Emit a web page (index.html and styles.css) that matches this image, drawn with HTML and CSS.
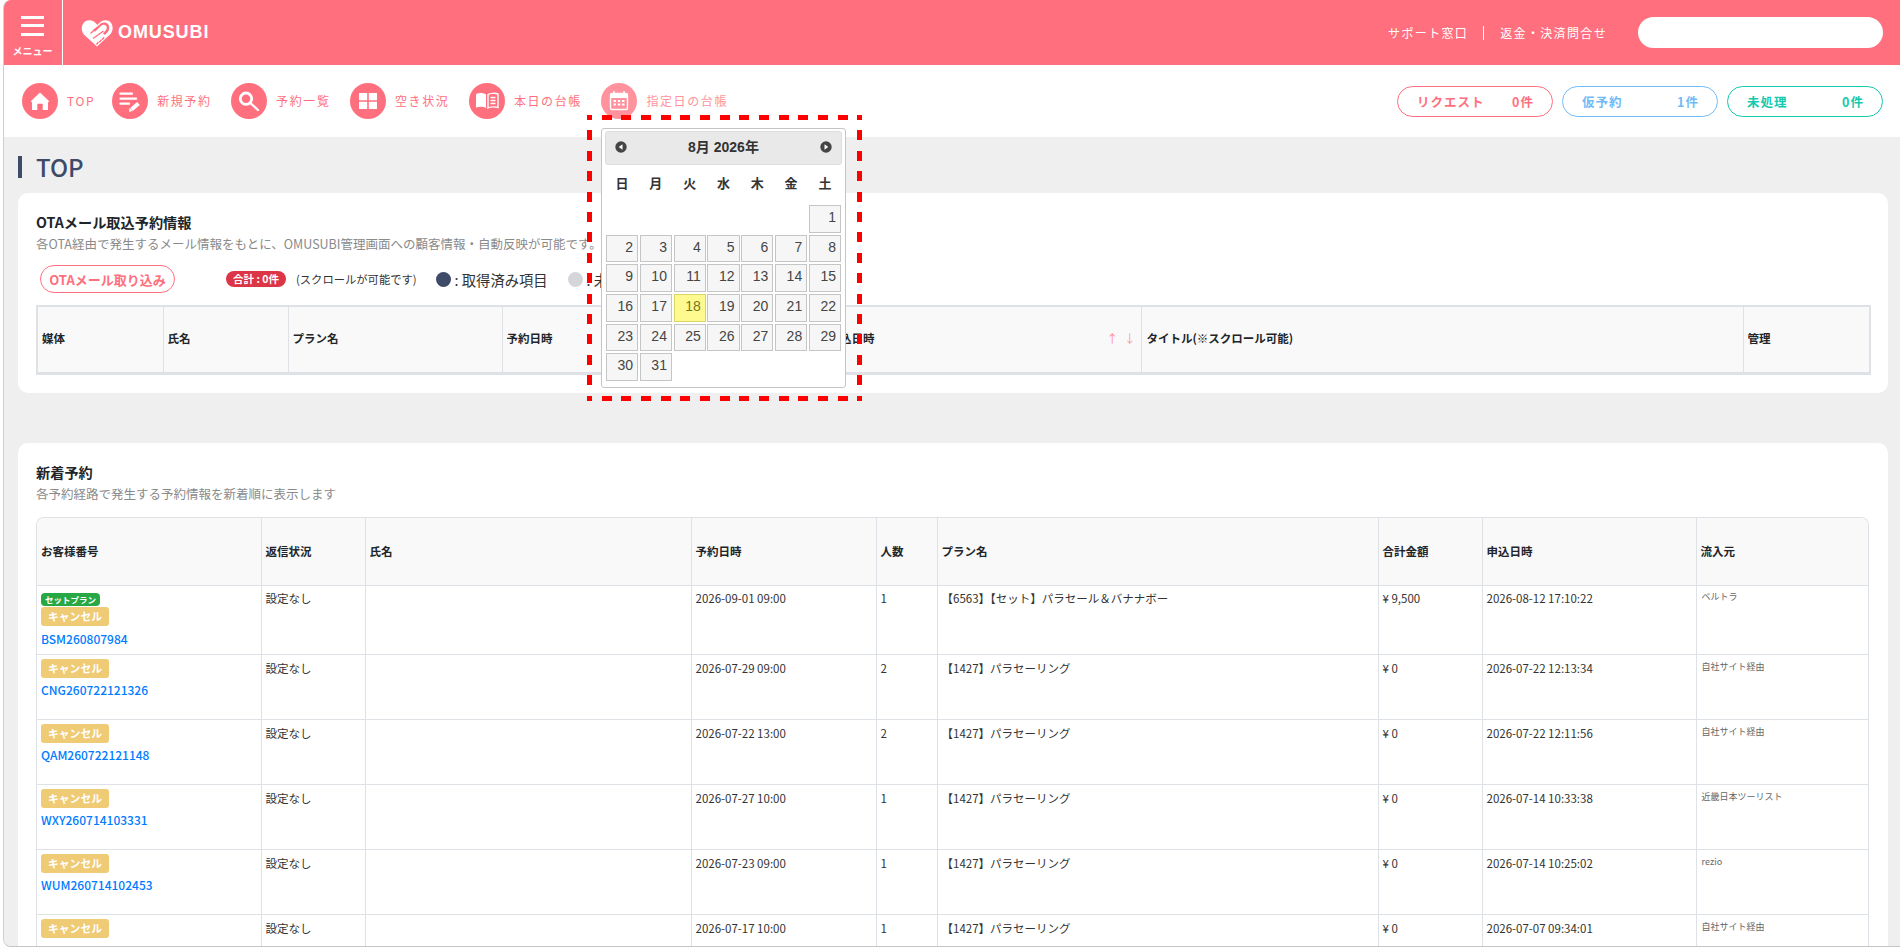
FILE: index.html
```html
<!DOCTYPE html>
<html lang="ja">
<head>
<meta charset="utf-8">
<title>OMUSUBI TOP</title>
<link rel="stylesheet" href="styles.css">
</head>
<body>
<div class="window">
  <header class="topbar">
    <div class="menu">
      <span class="burger"><i></i><i></i><i></i></span>
      <span class="menu-label">メニュー</span>
    </div>
    <div class="logo">
      <svg class="logo-mark" viewBox="0 0 32 28" aria-hidden="true">
        <path class="lm-heart" d="M16 27.500 2.800 15.500C-.5 11.500 .3 5 4.300 2.300 8 .3 12 1 14.500 4L16.500 6C19.500 1 25 0 28.500 2.300 32.500 5.500 32.500 11.500 29.500 15Z"/>
        <path class="lm-cut" d="M15 8.800 20 4.200C22.800 2.800 25.500 3.300 27.200 5.200 28.800 7.500 28.500 10.500 27 12.700L23.800 16 22 14.300 25 11C26.200 9.300 26 7.700 25 6.700 23.800 5.600 22.200 5.400 20.800 6.300L14 12.700 12 10.700Z" />
        <path class="lm-line" d="M9.500 14.500 16 8.500M12 19.500 22.500 12M15.500 25.500 17.500 23M18.300 23.300 20.500 20.800M21 20.800 23.200 18.300"/>
      </svg>
      <span class="logo-text">OMUSUBI</span>
    </div>
    <div class="top-links">
      <span>サポート窓口</span><span class="sep"></span><span>返金・決済問合せ</span>
    </div>
    <div class="search"></div>
  </header>

  <nav class="subnav">
    <a class="nav-item"><span class="circle"><svg viewBox="0 0 36 36"><path class="ic-fill" d="M18 9.500 8.800 18.200 10 19.500V27H15.300V20.800H20.700V27H26V19.500L27.200 18.200Z"/></svg></span><span class="nav-text">TOP</span></a>
    <a class="nav-item"><span class="circle"><svg viewBox="0 0 36 36"><path class="ic-line" d="M8.500 10.700H20M8.500 15.700H24M8.500 20.700H17"/><path class="ic-pen" d="M19.500 26.500 26.500 20.500"/><path class="ic-fill" d="M17 29 17.500 25 20.500 28Z"/></svg></span><span class="nav-text">新規予約</span></a>
    <a class="nav-item"><span class="circle"><svg viewBox="0 0 36 36"><circle class="ic-ring" cx="15" cy="15.700" r="5.700"/><path class="ic-line" d="M19.500 20.200 27 27"/></svg></span><span class="nav-text">予約一覧</span></a>
    <a class="nav-item"><span class="circle"><svg viewBox="0 0 36 36"><path class="ic-fill" d="M9 10H17.200V17.300H9ZM18.800 10H27V17.300H18.800ZM9 18.800H17.200V26H9ZM18.800 18.800H27V26H18.800Z"/></svg></span><span class="nav-text">空き状況</span></a>
    <a class="nav-item"><span class="circle"><svg viewBox="0 0 36 36"><path class="ic-fill" d="M7 11C10.500 9.500 14.500 9.800 17 11.500V25C14.500 23.500 10.500 23.300 7 24.500Z"/><path class="ic-thin" d="M19 11.500C21 10.300 26 9.800 29 11V24.500C26 23.500 21 23.800 19 25ZM21.500 14.500H26.500M21.500 17.500H26.500M21.500 20.500H26.500"/></svg></span><span class="nav-text">本日の台帳</span></a>
    <div class="nav-item nav-dim">
      <span class="circle"><svg viewBox="0 0 36 36"><rect class="ic-thin" x="9.500" y="10.500" width="17" height="16" rx="1.500"/><path class="ic-thin" d="M13 8V12M23 8V12"/><path class="ic-fill" d="M9.500 11H26.500V15H9.500Z"/><path class="ic-fill" d="M12.500 17H15V19H12.500ZM16.800 17H19.300V19H16.800ZM21 17H23.500V19H21ZM12.500 20.500H15V22.500H12.500ZM16.800 20.500H19.300V22.500H16.800ZM21 20.500H23.500V22.500H21Z"/></svg></span><span class="nav-text">指定日の台帳</span>
      <div class="picker-frame">
        <div class="datepicker">
          <div class="dp-head">
            <svg class="dp-arrow" viewBox="0 0 12 12"><circle class="dp-disc" cx="6" cy="6" r="5.700"/><path class="dp-tri" d="M7.500 3.300V8.700L3.800 6Z"/></svg>
            <span class="dp-title">8月 2026年</span>
            <svg class="dp-arrow" viewBox="0 0 12 12"><circle class="dp-disc" cx="6" cy="6" r="5.700"/><path class="dp-tri" d="M4.500 3.300V8.700L8.200 6Z"/></svg>
          </div>
          <div class="dp-week"><span>日</span><span>月</span><span>火</span><span>水</span><span>木</span><span>金</span><span>土</span></div>
          <div class="dp-days">
            <span class="day first">1</span>
            <span class="day">2</span><span class="day">3</span><span class="day">4</span><span class="day">5</span><span class="day">6</span><span class="day">7</span><span class="day">8</span>
            <span class="day">9</span><span class="day">10</span><span class="day">11</span><span class="day">12</span><span class="day">13</span><span class="day">14</span><span class="day">15</span>
            <span class="day">16</span><span class="day">17</span><span class="day today">18</span><span class="day">19</span><span class="day">20</span><span class="day">21</span><span class="day">22</span>
            <span class="day">23</span><span class="day">24</span><span class="day">25</span><span class="day">26</span><span class="day">27</span><span class="day">28</span><span class="day">29</span>
            <span class="day">30</span><span class="day">31</span>
          </div>
        </div>
      </div>
    </div>
    <div class="pills">
      <span class="pill pill-red"><span>リクエスト</span><span>0件</span></span>
      <span class="pill pill-blue"><span>仮予約</span><span>1件</span></span>
      <span class="pill pill-teal"><span>未処理</span><span>0件</span></span>
    </div>
  </nav>

  <main class="main">
    <h1 class="page-title">TOP</h1>

    <section class="card card-ota">
      <h2 class="card-title">OTAメール取込予約情報</h2>
      <p class="card-sub">各OTA経由で発生するメール情報をもとに、OMUSUBI管理画面への顧客情報・自動反映が可能です。</p>
      <div class="tools">
        <button class="ota-btn">OTAメール取り込み</button>
        <span class="total">合計 : 0件</span>
        <span class="scroll-note">(スクロールが可能です)</span>
        <span class="dot dot-dark"></span><span class="legend">: 取得済み項目</span>
        <span class="dot dot-grey"></span><span class="legend">: 未取得項目</span>
      </div>
      <table class="tbl tbl-ota">
        <colgroup><col class="o1"><col class="o2"><col class="o3"><col class="o4"><col class="o5"><col class="o6"><col class="o7"></colgroup>
        <thead><tr>
          <th>媒体</th><th>氏名</th><th>プラン名</th><th>予約日時</th>
          <th>申込日時<span class="sort"><span class="up">↑</span><span class="down">↓</span></span></th>
          <th class="th-title">タイトル(※スクロール可能)</th><th>管理</th>
        </tr></thead>
      </table>
    </section>

    <section class="card card-new">
      <h2 class="card-title">新着予約</h2>
      <p class="card-sub">各予約経路で発生する予約情報を新着順に表示します</p>
      <div class="tbl-wrap">
        <table class="tbl tbl-new">
          <colgroup><col class="n1"><col class="n2"><col class="n3"><col class="n4"><col class="n5"><col class="n6"><col class="n7"><col class="n8"><col class="n9"></colgroup>
          <thead><tr>
            <th>お客様番号</th><th>返信状況</th><th>氏名</th><th>予約日時</th><th>人数</th><th>プラン名</th><th>合計金額</th><th>申込日時</th><th>流入元</th>
          </tr></thead>
          <tbody>
            <tr>
              <td><span class="b-set">セットプラン</span><span class="b-cancel">キャンセル</span><a class="num">BSM260807984</a></td>
              <td>設定なし</td><td></td><td>2026-09-01 09:00</td><td>1</td><td>【6563】【セット】パラセール＆バナナボー</td><td>¥ 9,500</td><td>2026-08-12 17:10:22</td><td class="src">ベルトラ</td>
            </tr>
            <tr>
              <td><span class="b-cancel">キャンセル</span><a class="num">CNG260722121326</a></td>
              <td>設定なし</td><td></td><td>2026-07-29 09:00</td><td>2</td><td>【1427】パラセーリング</td><td>¥ 0</td><td>2026-07-22 12:13:34</td><td class="src">自社サイト経由</td>
            </tr>
            <tr>
              <td><span class="b-cancel">キャンセル</span><a class="num">QAM260722121148</a></td>
              <td>設定なし</td><td></td><td>2026-07-22 13:00</td><td>2</td><td>【1427】パラセーリング</td><td>¥ 0</td><td>2026-07-22 12:11:56</td><td class="src">自社サイト経由</td>
            </tr>
            <tr>
              <td><span class="b-cancel">キャンセル</span><a class="num">WXY260714103331</a></td>
              <td>設定なし</td><td></td><td>2026-07-27 10:00</td><td>1</td><td>【1427】パラセーリング</td><td>¥ 0</td><td>2026-07-14 10:33:38</td><td class="src">近畿日本ツーリスト</td>
            </tr>
            <tr>
              <td><span class="b-cancel">キャンセル</span><a class="num">WUM260714102453</a></td>
              <td>設定なし</td><td></td><td>2026-07-23 09:00</td><td>1</td><td>【1427】パラセーリング</td><td>¥ 0</td><td>2026-07-14 10:25:02</td><td class="src">rezio</td>
            </tr>
            <tr>
              <td><span class="b-cancel">キャンセル</span><a class="num">MGS260707093355</a></td>
              <td>設定なし</td><td></td><td>2026-07-17 10:00</td><td>1</td><td>【1427】パラセーリング</td><td>¥ 0</td><td>2026-07-07 09:34:01</td><td class="src">自社サイト経由</td>
            </tr>
          </tbody>
        </table>
      </div>
    </section>
  </main>
</div>
</body>
</html>
```

FILE: styles.css
```css
* { box-sizing: border-box; }
html, body { margin: 0; height: 950px; overflow: hidden; background: #fff; }
body { font-family: "Noto Sans CJK JP", "Noto Sans", sans-serif; color: #212529; font-size: 11.5px; }

.window {
  margin-left: 3px;
  height: 947px;
  border-left: 1px solid #cfcfcf;
  border-bottom: 1px solid #c4c4c4;
  border-radius: 8px 0 0 8px;
  overflow: hidden;
  background: #efefef;
}

/* top bar */
.topbar { display: flex; align-items: center; height: 65px; background: #ff6f7d; color: #fff; }
.menu {
  width: 59px; height: 65px; border-right: 1px solid #fff;
  display: flex; flex-direction: column; align-items: center; padding-top: 16px; padding-right: 1px;
}
.burger { display: flex; flex-direction: column; gap: 5.800px; width: 23px; }
.burger i { display: block; height: 2.700px; background: #fff; }
.menu-label { margin-top: 8px; font-size: 10px; font-weight: 700; line-height: 14px; white-space: nowrap; }
.logo { display: flex; align-items: center; margin-left: 18px; }
.logo-mark { width: 32px; height: 28px; display: block; }
.lm-heart { fill: #fff; }
.lm-cut { fill: #ff6f7d; }
.lm-line { fill: none; stroke: #ff6f7d; stroke-width: 1.300; }
.logo-text { margin-left: 5px; font-family: "Liberation Sans", Arial, sans-serif; font-weight: 700; font-size: 18px; letter-spacing: .9px; line-height: 22px; margin-top: -1px; }
.top-links { margin-left: auto; display: flex; align-items: center; font-size: 12px; letter-spacing: 1.350px; line-height: 18px; }
.sep { width: 1px; height: 14px; background: #fff; margin: 0 16px 0 15px; }
.search { width: 245px; height: 31px; margin: 0 17px 0 31px; background: #fff; border-radius: 16px; }

/* sub nav */
.subnav { position: relative; display: flex; align-items: center; height: 72px; padding-left: 18px; background: #fff; }
.nav-item { display: flex; align-items: center; margin-right: 19.500px; color: #ff6f7d; }
.nav-item:first-child { margin-right: 17px; }
.circle { width: 36px; height: 36px; border-radius: 50%; background: #ff6f7d; display: block; }
.circle svg { display: block; width: 36px; height: 36px; }
.nav-text { margin-left: 9px; font-size: 12px; font-weight: 400; letter-spacing: 1.600px; line-height: 18px; white-space: nowrap; }
.nav-dim { color: #ff929c; }
.nav-dim .circle { background: #ff929c; }
.ic-fill { fill: #fff; }
.ic-line { fill: none; stroke: #fff; stroke-width: 2.300; stroke-linecap: round; }
.ic-pen { fill: none; stroke: #fff; stroke-width: 4; }
.ic-ring { fill: none; stroke: #fff; stroke-width: 2.800; }
.ic-thin { fill: none; stroke: #fff; stroke-width: 1.400; }
.pills { margin-left: auto; display: flex; gap: 9px; padding-right: 17px; }
.pill {
  width: 156px; height: 31px; border: 1px solid; border-radius: 16px; padding: 0 18px 0 19px;
  display: flex; align-items: center; justify-content: space-between;
  font-size: 12.500px; font-weight: 700; letter-spacing: 1px; background: #fff;
}
.pill-red { color: #ff6f7d; border-color: #ff6f7d; }
.pill-blue { color: #72bbf8; border-color: #72bbf8; }
.pill-teal { color: #14c9ad; border-color: #14c9ad; }

/* date picker overlay: dashes drawn to the reference's pitch */
.picker-frame {
  --hdash: repeating-linear-gradient(90deg, #f00 0 5px, transparent 5px 14.660px, #f00 14.660px 19.660px);
  --vdash: repeating-linear-gradient(180deg, #f00 0 5px, transparent 5px 15.400px, #f00 15.400px 20.400px);
  position: absolute; left: 583px; top: 50px; z-index: 5;
  width: 275px; height: 286px; padding: 13px 16px 13px 14px;
  background:
    var(--hdash) left top / 100% 5px no-repeat,
    var(--hdash) left bottom / 100% 5px no-repeat,
    var(--vdash) left top / 5px 100% no-repeat,
    var(--vdash) right top / 5px 100% no-repeat;
}
.datepicker {
  width: 245px; height: 260px; padding: 2px 3px 0; background: #fff;
  border: 1px solid #c5c5c5; border-radius: 3px;
  font-family: "Liberation Sans", Arial, "Noto Sans CJK JP", sans-serif; color: #454545;
}
.dp-head {
  display: flex; align-items: center; justify-content: space-between; height: 34px; padding: 0 9px 2px;
  background: #e9e9e9; border: 1px solid #dddddd; border-radius: 3px;
}
.dp-arrow { width: 12px; height: 12px; display: block; }
.dp-disc { fill: #454545; }
.dp-tri { fill: #fff; }
.dp-title { font-size: 14px; font-weight: 700; color: #333; margin-top: -2px; }
.dp-week { display: grid; grid-template-columns: repeat(7, 1fr); column-gap: 1.700px; height: 40px; align-items: center; padding: 0 1px 5px; font-size: 13px; font-weight: 700; color: #333; text-align: center; }
.dp-days { display: grid; grid-template-columns: repeat(7, 1fr); grid-auto-rows: 27.700px; gap: 2px 1.700px; padding: 0 1px; }
.day {
  display: block; padding: 1px 4px 0 0; text-align: right; font-size: 14px; line-height: 20px;
  background: #f6f6f6; border: 1px solid #c5c5c5;
}
.day.first { grid-column: 7; }
.day.today { background: #fffa90; border-color: #dad55e; color: #777620; }

/* main */
.main { padding: 19px 12px 0 14px; background: #efefef; }
.page-title {
  margin: 0; padding-left: 14px; height: 22px; line-height: 22px;
  border-left: 4px solid #3d4a68; font-size: 24px; font-weight: 500; color: #3d4a68;
}
.card { background: #fff; border-radius: 10px; padding: 21px 19px 19px 18px; }
.card-ota { margin-top: 15px; height: 200px; }
.card-new { margin-top: 50px; height: 600px; }
.card-title { margin: 0; font-size: 14.200px; font-weight: 700; line-height: 16px; color: #212529; }
.card-sub { margin: 5px 0 0; font-size: 12.500px; line-height: 18px; color: #8a8a8a; white-space: nowrap; }
.tools { display: flex; align-items: center; margin-top: 12px; height: 28px; }
.ota-btn {
  width: 135px; height: 28px; margin-left: 4px; padding: 0; background: #fff;
  border: 1.500px solid #ff6f7d; border-radius: 14px;
  font-family: inherit; font-size: 13px; font-weight: 700; color: #ff6f7d; white-space: nowrap;
}
.total { margin-left: 51px; width: 60px; height: 16px; border-radius: 8px; background: #dc3545; color: #fff; font-size: 10.500px; font-weight: 700; line-height: 16px; text-align: center; }
.scroll-note { margin-left: 10px; font-size: 11.300px; color: #333; white-space: nowrap; }
.dot { width: 15px; height: 15px; border-radius: 50%; }
.dot-dark { margin-left: 19px; background: #3d4a68; }
.dot-grey { margin-left: 20px; background: #d4d6da; }
.legend { margin-left: 4px; font-size: 14.300px; color: #333; white-space: nowrap; }

/* tables */
.tbl { width: 100%; border-collapse: collapse; table-layout: fixed; }
.tbl th, .tbl td { border: 1px solid #dee2e6; padding: 4px; text-align: left; vertical-align: top; line-height: 16px; white-space: nowrap; overflow: hidden; }
.tbl th { vertical-align: middle; background: #f9f9f9; font-weight: 700; font-size: 11.500px; color: #212529; }
.tbl-ota { margin-top: 12px; border: 2px solid #dee2e6; border-bottom-width: 3px; }
.tbl-ota th { height: 67px; padding-bottom: 6px; }
.tbl-ota .th-title { padding-left: 5px; }
.sort { float: right; margin-right: 1px; font-weight: 400; }
.sort .up { color: #ff8a96; margin-right: 6px; }
.sort .down { color: #f5a08a; }
.o1 { width: 126px; } .o2 { width: 125px; } .o3 { width: 214px; } .o4 { width: 322px; } .o5 { width: 317px; } .o6 { width: 602px; } .o7 { width: 127px; }

.tbl-wrap { margin-top: 14px; border-radius: 8px 8px 0 0; overflow: hidden; border: solid #dee2e6; border-width: 1px 1px 0; }
.tbl-new { border-style: hidden; }
.tbl-new th { height: 67px; }
.tbl-new tbody tr { height: 65px; }
.tbl-new tbody tr:first-child { height: 69px; }
.n1 { width: 224px; } .n2 { width: 104px; } .n3 { width: 326px; } .n4 { width: 185px; } .n5 { width: 61px; } .n6 { width: 441px; } .n7 { width: 104px; } .n8 { width: 214px; } .n9 { width: 173px; }
.tbl-new td { color: #333; padding-top: 5px; }
.tbl-new tbody tr:first-child td { padding-top: 4px; }
.b-set { display: block; width: 59px; height: 13px; margin-top: 3px; border-radius: 4px; background: #28a745; color: #fff; font-size: 8.500px; font-weight: 700; line-height: 13px; text-align: center; }
.b-cancel { display: block; width: 68px; height: 19px; margin-top: -1px; border-radius: 3px; background: #f0cb75; color: #fff; font-size: 10.800px; font-weight: 700; line-height: 19px; text-align: center; }
.b-set + .b-cancel { margin-top: 1px; }
.num { display: block; margin-top: 3px; font-size: 12px; font-weight: 500; line-height: 18px; color: #007bff; }
.b-set + .b-cancel + .num { margin-top: 4px; }
.tbl-new td.src { font-size: 9px; color: #666; padding-left: 5px; line-height: 14px; }
```
